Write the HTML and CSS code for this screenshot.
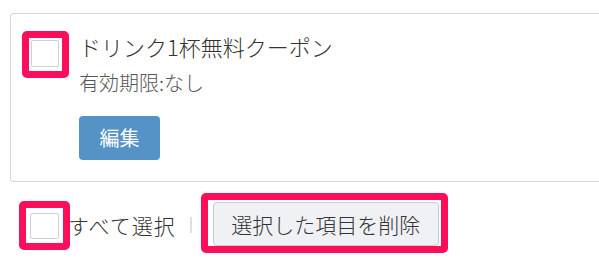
FILE: index.html
```html
<!DOCTYPE html>
<html lang="ja">
<head>
    <meta charset="UTF-8">
    <title>クーポン一覧</title>
    <link rel="stylesheet" href="styles.css">
</head>
<body>

<div class="coupon-card">
    <div class="mark mark-item">
        <span class="check-box"></span>
    </div>
    <div class="coupon-body">
        <div class="coupon-title">ドリンク1杯無料クーポン</div>
        <div class="coupon-limit">有効期限:なし</div>
        <a href="#" class="btn-edit">編集</a>
    </div>
</div>

<div class="bulk-bar">
    <div class="mark mark-all">
        <span class="check-box"></span>
    </div>
    <span class="select-all">すべて選択</span>
    <span class="divider"></span>
    <div class="mark mark-delete">
        <button class="btn-delete">選択した項目を削除</button>
    </div>
</div>

</body>
</html>
```

FILE: styles.css
```css
body {
    font-family: "Noto Sans CJK JP", "Noto Sans", sans-serif;
    background: #fff;
    color: #333;
    margin: 0;
}
.coupon-card {
    display: flex;
    align-items: flex-start;
    margin: 13px 0 0 10px;
    padding: 17px 0 21px 11px;
    border: 1px solid #d4d8dc;
    border-right: none;
    border-radius: 4px 0 0 4px;
}
.mark {
    border: 7px solid #fb0e5a;
    border-radius: 5px;
    background: #fff;
}
.mark-item {
    width: 31px;
    height: 31px;
    padding: 2px 0 0 2px;
}
.check-box {
    display: block;
    width: 26px;
    height: 25px;
    border: 1px solid #cdd1d5;
    border-radius: 2px;
    background: #fff;
}
.coupon-body {
    margin-left: 10px;
}
.coupon-title {
    font-size: 22px;
    font-weight: 300;
    line-height: 30px;
    margin-top: 0;
}
.coupon-limit {
    font-size: 20px;
    font-weight: 300;
    line-height: 28px;
    color: #555;
    margin-top: 8px;
}
.btn-edit {
    display: inline-block;
    margin-top: 19px;
    width: 81px;
    height: 44px;
    line-height: 44px;
    text-align: center;
    background: #5592c6;
    color: #fff;
    font-size: 20px;
    text-decoration: none;
    border-radius: 4px;
}
.bulk-bar {
    display: flex;
    align-items: center;
    margin: 11px 0 0 19px;
}
.mark-all {
    align-self: flex-start;
    margin-top: 8px;
    width: 33px;
    height: 30px;
    padding: 5px 0 0 4px;
}
.mark-all .check-box {
    width: 27px;
    height: 24px;
}
.select-all {
    font-size: 21px;
    font-weight: 300;
    letter-spacing: 1px;
    margin-left: -2px;
    margin-top: 3px;
}
.divider {
    width: 2px;
    height: 16px;
    background: #dde0e4;
    margin: 3px 9px 0 14px;
}
.mark-delete {
    padding: 2px 2px 0 5px;
}
.btn-delete {
    display: block;
    width: 226px;
    height: 44px;
    font-family: inherit;
    font-size: 21px;
    font-weight: 300;
    color: #333;
    background: #eff1f5;
    border: 1px solid #c9ccd1;
    border-radius: 4px;
    padding: 0;
}
```
